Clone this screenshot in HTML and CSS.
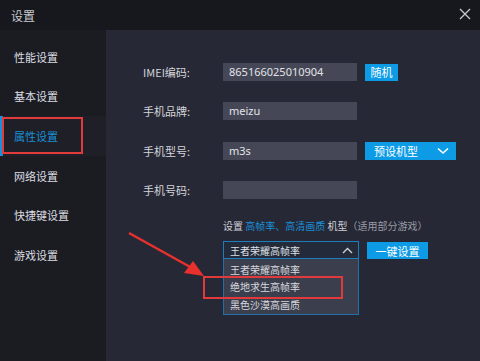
FILE: index.html
```html
<!DOCTYPE html>
<html>
<head>
<meta charset="utf-8">
<link rel="stylesheet" href="styles.css">
</head>
<body>
<div class="window">
  <div class="titlebar">
    <span class="title">设置</span>
    <svg class="close" width="12" height="12" viewBox="0 0 12 12"><path d="M1 1L11 11M11 1L1 11" stroke="#c8c9cf" stroke-width="1.3" fill="none"/></svg>
  </div>
  <div class="main">
    <div class="sidebar">
      <div class="nav">性能设置</div>
      <div class="nav">基本设置</div>
      <div class="nav active">属性设置</div>
      <div class="nav">网络设置</div>
      <div class="nav">快捷键设置</div>
      <div class="nav">游戏设置</div>
    </div>
    <div class="panel">
      <div class="row">
        <span class="label">IMEI编码:</span>
        <div class="input">865166025010904</div>
        <div class="btn btn-small">随机</div>
      </div>
      <div class="row">
        <span class="label">手机品牌:</span>
        <div class="input">meizu</div>
      </div>
      <div class="row">
        <span class="label">手机型号:</span>
        <div class="input">m3s</div>
        <div class="btn btn-preset"><span>预设机型</span>
          <svg width="12" height="8" viewBox="0 0 12 8"><path d="M1 1.5L6 6L11 1.5" stroke="#fff" stroke-width="1.6" fill="none"/></svg>
        </div>
      </div>
      <div class="row">
        <span class="label">手机号码:</span>
        <div class="input"></div>
      </div>
      <div class="note">设置 <span class="hl">高帧率、高清画质</span> 机型<span class="dim">（适用部分游戏）</span></div>
      <div class="selrow">
        <div class="selwrap">
          <div class="select"><span>王者荣耀高帧率</span>
            <svg width="11" height="7" viewBox="0 0 11 7"><path d="M1 6L5.5 1.5L10 6" stroke="#d0d2d8" stroke-width="1.4" fill="none"/></svg>
          </div>
          <div class="list">
            <div class="opt">王者荣耀高帧率</div>
            <div class="opt">绝地求生高帧率</div>
            <div class="opt">黑色沙漠高画质</div>
          </div>
        </div>
        <div class="btn btn-one">一键设置</div>
      </div>
    </div>
  </div>
  <div class="mark mark-nav"></div>
  <div class="mark mark-opt"></div>
  <svg class="arrow" width="480" height="361" viewBox="0 0 480 361">
    <path d="M129 233L192 268" stroke="#e8312e" stroke-width="2.4" fill="none"/>
    <path d="M204 276L184 273L193 261Z" fill="#e8312e"/>
  </svg>
</div>
</body>
</html>
```

FILE: styles.css
```css
* { box-sizing: border-box; }
html, body { margin: 0; padding: 0; }
body {
  width: 480px;
  height: 361px;
  overflow: hidden;
  font-family: "Noto Sans CJK SC", "Noto Sans", sans-serif;
  background: #1a1b21;
}
.window {
  position: relative;
  width: 480px;
  height: 361px;
  display: flex;
  flex-direction: column;
}
.titlebar {
  height: 30px;
  flex: none;
  background: #17181d;
  display: flex;
  align-items: center;
  justify-content: space-between;
  padding: 0 9px 0 11px;
}
.title { color: #c9cad0; font-size: 12px; }
.close { margin-top: -3px; }
.main { flex: 1; display: flex; }
.sidebar {
  width: 106px;
  flex: none;
  background: #1b1c22;
  padding-top: 7px;
}
.nav {
  height: 39.6px;
  display: flex;
  align-items: center;
  padding-left: 14px;
  color: #dcdde2;
  font-size: 11px;
}
.nav.active {
  color: #1a90d8;
  background: #1e1f27;
  box-shadow: inset 3px 0 0 #1a90d8;
}
.panel {
  flex: 1;
  background: #262835;
  padding: 33px 0 0 37px;
}
.row {
  display: flex;
  align-items: center;
  height: 18px;
  margin-bottom: 21.3px;
}
.label {
  width: 80px;
  color: #d4d5da;
  font-size: 11px;
}
.input {
  width: 134px;
  height: 18px;
  background: #454756;
  color: #e2e3e8;
  font-size: 11px;
  line-height: 18px;
  padding-left: 6px;
  font-family: "Noto Sans", sans-serif;
}
.btn {
  background: #0d9be6;
  color: #fff;
  font-size: 11px;
  display: flex;
  align-items: center;
  margin-left: 8px;
}
.btn-small {
  width: 33px;
  height: 17px;
  justify-content: center;
}
.btn-preset {
  width: 91px;
  height: 18px;
  justify-content: space-between;
  padding: 0 7px 0 9px;
}
.note {
  margin-top: -2px;
  font-size: 10px;
  color: #cfd0d6;
  padding-left: 80px;
  height: 16px;
  line-height: 16px;
}
.hl { color: #1a8fd6; }
.dim { color: #9a9ca6; }
.selrow {
  display: flex;
  align-items: flex-start;
  margin-top: 7px;
  padding-left: 80px;
}
.selwrap { width: 136px; }
.select {
  height: 18px;
  border: 1px solid #1f7dbd;
  background: #232a3a;
  display: flex;
  align-items: center;
  justify-content: space-between;
  padding: 0 5px 0 6px;
  color: #dfe0e5;
  font-size: 10px;
}
.list {
  border: 1px solid #1f6fa8;
  border-top: none;
  background: #3b3e4d;
  padding: 2px 0 1px;
}
.opt {
  height: 17.3px;
  line-height: 17.3px;
  font-size: 10px;
  color: #d8d9de;
  padding-left: 6px;
}
.btn-one {
  width: 61px;
  height: 17px;
  justify-content: center;
  margin-top: 1px;
}
.mark {
  position: absolute;
  border: 2px solid #e03a3a;
}
.mark-nav { left: 2px; top: 117px; width: 81px; height: 37px; }
.mark-opt { left: 203px; top: 276px; width: 140px; height: 23px; }
.arrow { position: absolute; left: 0; top: 0; pointer-events: none; }
```
